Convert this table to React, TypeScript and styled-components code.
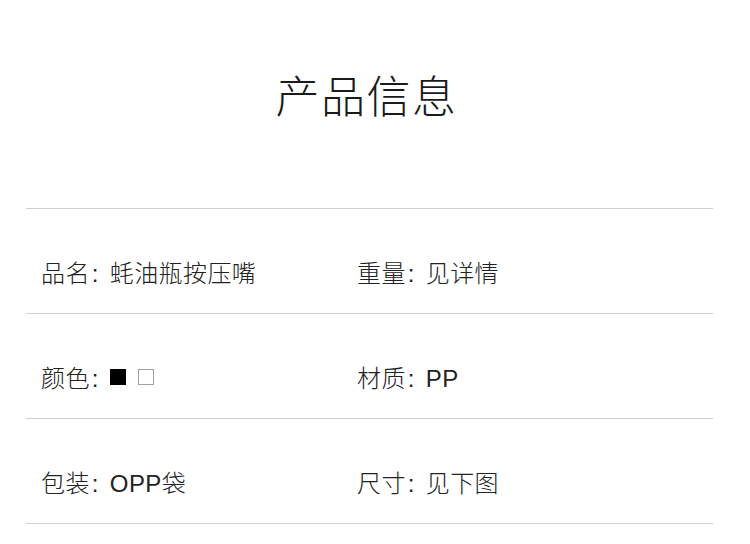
import React from "react";
import styled, { createGlobalStyle } from "styled-components";

const Global = createGlobalStyle`
  html, body { margin: 0; padding: 0; background: #fff; }
  body { font-family: "Liberation Sans", "Noto Sans CJK SC", sans-serif; color: #222; }
`;

const Page = styled.div`
  width: 750px;
  height: 544px;
  overflow: hidden;
  background: #fff;
`;

const TitleBar = styled.div`
  height: 208px;
  margin: 0 37px 0 26px;
  display: flex;
  justify-content: center;
  padding: 69px 6px 0 0;
  box-sizing: border-box;
`;

const Title = styled.h1`
  margin: 0;
  font-family: "Noto Sans CJK SC", sans-serif;
  font-size: 44px;
  line-height: 50px;
  font-weight: 300;
  letter-spacing: 1.5px;
  color: #1a1a1a;
`;

const Table = styled.div`
  margin: 0 37px 0 26px;
  border-top: 1px solid #cfcfcf;
`;

const Row = styled.div`
  display: grid;
  grid-template-columns: 316px 1fr;
  height: 105px;
  box-sizing: border-box;
  padding: 52px 0 0 15px;
  border-bottom: 1px solid #cfcfcf;
`;

const Cell = styled.div`
  display: flex;
  align-items: center;
  font-size: 24px;
  line-height: 26px;
  height: 26px;
  font-weight: 300;
  letter-spacing: 0.4px;
  color: #222;
  white-space: nowrap;
`;

const Sep = styled.span`
  display: inline-block;
  width: 18px;
  padding-left: 2px;
`;

const Swatch = styled.span<{ $dark?: boolean }>`
  display: inline-block;
  width: 16px;
  height: 16px;
  box-sizing: border-box;
  background: ${(p) => (p.$dark ? "#000" : "#fff")};
  border: 1px solid ${(p) => (p.$dark ? "#000" : "#a0a0a0")};
  margin-right: 12px;
  position: relative;
  top: -2px;
`;

type Item = { label: string; value?: string; swatches?: boolean };

const rows: [Item, Item][] = [
  [
    { label: "品名", value: "蚝油瓶按压嘴" },
    { label: "重量", value: "见详情" },
  ],
  [
    { label: "颜色", swatches: true },
    { label: "材质", value: "PP" },
  ],
  [
    { label: "包装", value: "OPP袋" },
    { label: "尺寸", value: "见下图" },
  ],
];

function Field({ item }: { item: Item }) {
  return (
    <Cell>
      {item.label}
      <Sep>:</Sep>
      {item.swatches ? (
        <>
          <Swatch $dark />
          <Swatch />
        </>
      ) : (
        item.value
      )}
    </Cell>
  );
}

export default function App() {
  return (
    <Page>
      <Global />
      <TitleBar>
        <Title>产品信息</Title>
      </TitleBar>
      <Table>
        {rows.map((r, i) => (
          <Row key={i}>
            <Field item={r[0]} />
            <Field item={r[1]} />
          </Row>
        ))}
      </Table>
    </Page>
  );
}
